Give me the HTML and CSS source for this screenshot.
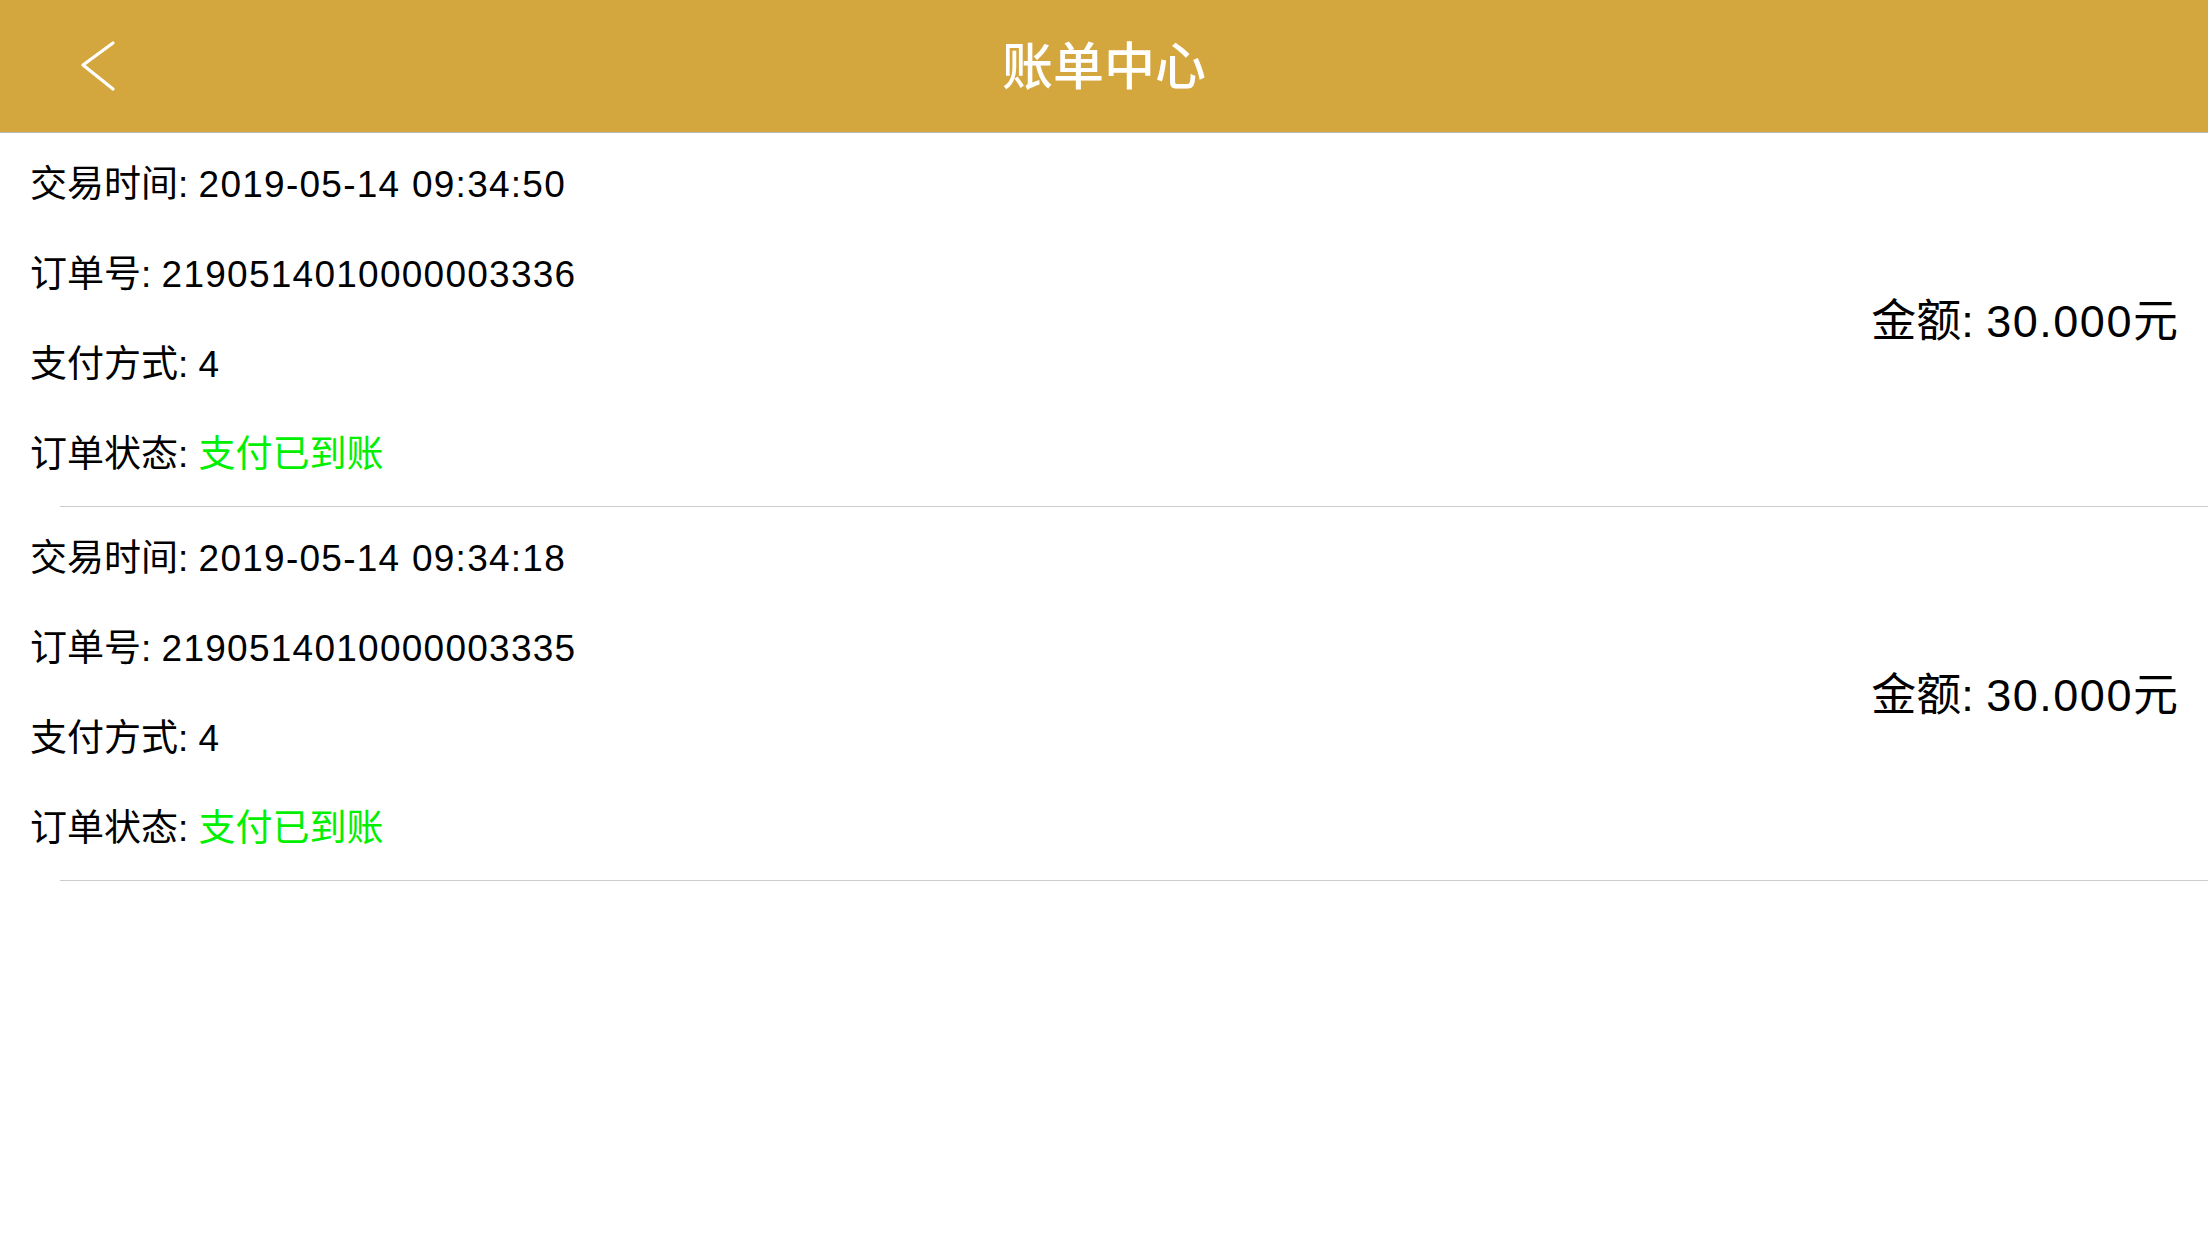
FILE: index.html
```html
<!DOCTYPE html>
<html lang="zh">

<head>
    <meta charset="UTF-8">
    <meta name="viewport" content="width=device-width, initial-scale=1.0">
    <title>账单中心</title>
    <link rel="stylesheet" href="styles.css">
</head>

<body>
    <div class="nav">
        <div class="nav-left">
            <a class="back" href="#">
                <svg width="48" height="56" viewBox="0 0 48 56">
                    <path d="M41 5 L11 27 L41 51" fill="none" stroke="#fff" stroke-width="3.2" stroke-linecap="round" stroke-linejoin="round" />
                </svg>
            </a>
        </div>
        <h1 class="title">账单中心</h1>
        <div class="nav-right"></div>
    </div>

    <div class="bills">
        <div class="bill">
            <div class="info">
                <div class="line">交易时间: <span class="num">2019-05-14 09:34:50</span></div>
                <div class="line">订单号: <span class="num">2190514010000003336</span></div>
                <div class="line">支付方式: <span class="num">4</span></div>
                <div class="line">订单状态: <span class="status">支付已到账</span></div>
            </div>
            <div class="amount">金额: <span class="num">30.000</span>元</div>
        </div>
        <div class="bill">
            <div class="info">
                <div class="line">交易时间: <span class="num">2019-05-14 09:34:18</span></div>
                <div class="line">订单号: <span class="num">2190514010000003335</span></div>
                <div class="line">支付方式: <span class="num">4</span></div>
                <div class="line">订单状态: <span class="status">支付已到账</span></div>
            </div>
            <div class="amount">金额: <span class="num">30.000</span>元</div>
        </div>
    </div>
</body>

</html>
```

FILE: styles.css
```css
body {
    margin: 0;
    font-family: "Liberation Sans", "Noto Sans CJK SC", sans-serif;
    color: #000;
    background: #fff;
}

.nav {
    display: grid;
    grid-template-columns: 1fr auto 1fr;
    align-items: center;
    height: 132px;
    background-color: #d4a63e;
    border-bottom: 1px solid #b9b9b9;
}

.nav-left {
    padding-left: 72px;
}

.back {
    display: block;
    width: 48px;
    height: 56px;
}

.back svg {
    display: block;
}

.title {
    margin: 0 0 6px;
    font-family: "Noto Sans CJK SC", sans-serif;
    font-size: 51px;
    font-weight: 500;
    color: #fff;
}

.bill {
    display: flex;
    justify-content: space-between;
    align-items: center;
    padding: 7px 30px 7px 30px;
    background: linear-gradient(#cbcbcb, #cbcbcb) no-repeat 60px 100% / calc(100% - 60px) 1px;
}

.line {
    font-size: 37px;
    line-height: 90px;
    white-space: nowrap;
}

.num {
    letter-spacing: 0.034em;
}

.status {
    color: #00f000;
}

.amount {
    padding-bottom: 5px;
    font-size: 45px;
    white-space: nowrap;
}
```
